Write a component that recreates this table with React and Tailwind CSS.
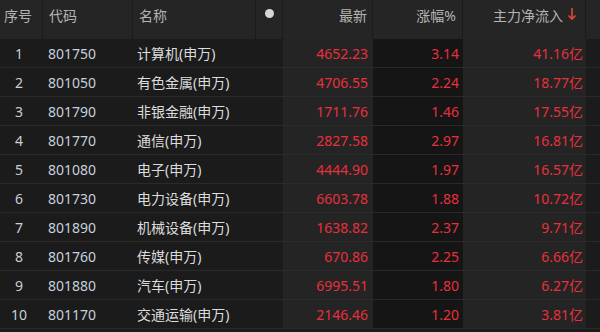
const rows = [
  ["1", "801750", "计算机(申万)", "4652.23", "3.14", "41.16亿"],
  ["2", "801050", "有色金属(申万)", "4706.55", "2.24", "18.77亿"],
  ["3", "801790", "非银金融(申万)", "1711.76", "1.46", "17.55亿"],
  ["4", "801770", "通信(申万)", "2827.58", "2.97", "16.81亿"],
  ["5", "801080", "电子(申万)", "4444.90", "1.97", "16.57亿"],
  ["6", "801730", "电力设备(申万)", "6603.78", "1.88", "10.72亿"],
  ["7", "801890", "机械设备(申万)", "1638.82", "2.37", "9.71亿"],
  ["8", "801760", "传媒(申万)", "670.86", "2.25", "6.66亿"],
  ["9", "801880", "汽车(申万)", "6995.51", "1.80", "6.27亿"],
  ["10", "801170", "交通运输(申万)", "2146.46", "1.20", "3.81亿"],
];

const font = { fontFamily: '"Noto Sans", "Noto Sans CJK SC", sans-serif' };

const HeadCell = ({ className = "", children }) => (
  <div
    className={`h-[39px] bg-[#252525] border-r border-[#1b1b1b] pt-[5px] text-[14px] text-[#b4b4b4] ${className}`}
  >
    {children}
  </div>
);

const App = () => {
  return (
    <div className="w-[600px] h-[332px] bg-[#1b1b1b] overflow-hidden" style={font}>
      <div className="flex">
        <HeadCell className="w-[43px] pl-[4px]">序号</HeadCell>
        <HeadCell className="w-[90px] pl-[6px]">代码</HeadCell>
        <HeadCell className="w-[123px] pl-[6px]">名称</HeadCell>
        <HeadCell className="w-[27px] flex justify-center">
          <span className="mt-[4px] w-[9px] h-[9px] rounded-full bg-[#d6d6d6]" />
        </HeadCell>
        <HeadCell className="w-[90px] text-right pr-[5px]">最新</HeadCell>
        <HeadCell className="w-[90px] text-right pr-[6px]">涨幅%</HeadCell>
        <HeadCell className="w-[123px] flex justify-end items-start pr-[8px] gap-[4px]">
          <span>主力净流入</span>
          <svg width="10" height="14" viewBox="0 0 10 14" className="mt-[2px]">
            <path d="M5 1 V12 M1.5 8.5 L5 12 L8.5 8.5" stroke="#e5462f" strokeWidth="1.6" fill="none" />
          </svg>
        </HeadCell>
        <div className="flex-1 h-[39px] bg-[#252525]" />
      </div>
      {rows.map((r) => (
        <div key={r[0]} className="flex h-[29px] border-b border-[#2a2a2a] text-[14px]">
          <div className="w-[43px] bg-[#1b1b1b] flex items-center justify-center pr-[5px] text-[#c6d0db]">
            {r[0]}
          </div>
          <div className="w-[90px] bg-[#1b1b1b] flex items-center pl-[5px] text-[#c6d0db]">
            {r[1]}
          </div>
          <div className="w-[150px] bg-[#1b1b1b] flex items-center pl-[4px] text-[#dcdcdc]">
            {r[2]}
          </div>
          <div className="w-[90px] bg-[#242424] flex items-center justify-end pr-[5px] text-[#e8303c]">
            {r[3]}
          </div>
          <div className="w-[90px] bg-[#151515] flex items-center justify-end pr-[4px] text-[#e8303c]">
            {r[4]}
          </div>
          <div className="w-[123px] bg-[#242424] flex items-center justify-end pr-[3px] text-[#e8303c]">
            {r[5]}
          </div>
          <div className="flex-1 bg-[#1b1b1b]" />
        </div>
      ))}
    </div>
  );
};

export default App;
